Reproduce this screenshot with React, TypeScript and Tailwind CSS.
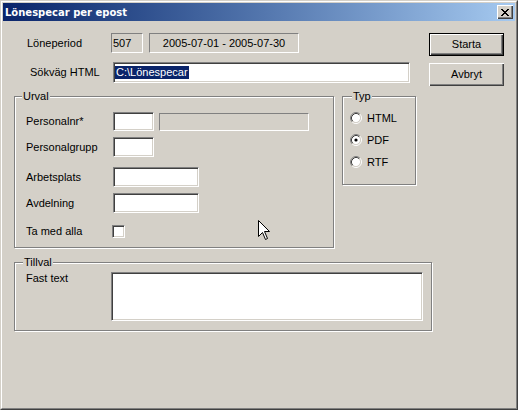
const sunken =
  "border border-t-[#808080] border-l-[#808080] border-r-white border-b-white shadow-[inset_1px_1px_0_#404040,inset_-1px_-1px_0_#d4d0c8] bg-white";
const thinSunken = "border border-t-[#808080] border-l-[#808080] border-r-white border-b-white";
const etched = "relative border border-[#808080] shadow-[inset_1px_1px_0_#fff,1px_1px_0_#fff]";

function Legend({ text, left }: { text: string; left: string }) {
  return (
    <span className={`absolute top-[-7px] ${left} bg-[#d4d0c8] px-[1px] leading-[13px]`}>{text}</span>
  );
}

function Radio({ checked, label }: { checked?: boolean; label: string }) {
  return (
    <div className="flex h-[12px] items-center gap-[5px]">
      <svg width="12" height="12" viewBox="0 0 12 12">
        <circle cx="6" cy="6" r="4.2" fill="#fff" />
        <path d="M2.11 9.89A5.5 5.5 0 0 1 9.89 2.11" fill="none" stroke="#808080" />
        <path d="M9.89 2.11A5.5 5.5 0 0 1 2.11 9.89" fill="none" stroke="#fff" />
        <path d="M2.82 9.18A4.5 4.5 0 0 1 9.18 2.82" fill="none" stroke="#404040" />
        <path d="M9.18 2.82A4.5 4.5 0 0 1 2.82 9.18" fill="none" stroke="#d4d0c8" />
        {checked && <circle cx="6" cy="6" r="1.6" fill="#000" />}
      </svg>
      <span className="leading-[13px]">{label}</span>
    </div>
  );
}

function FieldRow({ label, className, children }: { label: string; className?: string; children: React.ReactNode }) {
  return (
    <div className={`flex items-center ${className ?? ""}`}>
      <span className="w-[87px] leading-[13px]">{label}</span>
      {children}
    </div>
  );
}

export default function App() {
  return (
    <div
      className="relative h-[410px] w-[518px] border border-t-[#d4d0c8] border-l-[#d4d0c8] border-r-[#404040] border-b-[#404040] bg-[#d4d0c8] text-[11px] text-black"
      style={{ fontFamily: '"Liberation Sans", Arial, sans-serif' }}
    >
      <div className="flex h-full flex-col border border-t-white border-l-white border-r-[#808080] border-b-[#808080] p-[1px]">
        {/* title bar */}
        <div className="flex h-[18px] items-center justify-between bg-gradient-to-r from-[#0a246a] to-[#a6caf0] pl-[2px] pr-[2px]">
          <span className="font-['DejaVu_Sans',sans-serif] text-[10px] font-bold text-white">Lönespecar per epost</span>
          <button className="flex h-[14px] w-[16px] items-center justify-center bg-[#d4d0c8] shadow-[inset_1px_1px_0_#fff,inset_-1px_-1px_0_#404040,inset_-2px_-2px_0_#808080]">
            <svg width="8" height="7" viewBox="0 0 8 7" shapeRendering="crispEdges">
              <path d="M0 0h2v1H0zM6 0h2v1H6zM1 1h2v1H1zM5 1h2v1H5zM2 2h4v1H2zM3 3h2v1H3zM2 4h4v1H2zM1 5h2v1H1zM5 5h2v1H5zM0 6h2v1H0zM6 6h2v1H6z" fill="#000" />
            </svg>
          </button>
        </div>

        <div className="flex flex-1 flex-col px-[11px] pt-[12px]">
          {/* top rows + buttons */}
          <div className="flex justify-between">
            <div className="flex flex-col">
              <div className="flex h-[20px] items-center">
                <span className="w-[97px] pl-[13px]">Löneperiod</span>
                <div className={`${thinSunken} flex h-[20px] w-[32px] items-center pl-[1px]`}>507</div>
                <div className={`${thinSunken} ml-[6px] flex h-[20px] w-[150px] items-center justify-center`}>
                  2005-07-01 - 2005-07-30
                </div>
              </div>
              <div className="mt-[9px] flex h-[21px] items-center">
                <span className="w-[99px] pl-[16px]">Sökväg HTML</span>
                <div className={`${sunken} flex h-[21px] w-[297px] items-center pl-[1px]`}>
                  <span className="bg-[#0a246a] px-[1px] leading-[13px] text-white">C:\Lönespecar</span>
                </div>
              </div>
            </div>
            <div className="flex flex-col gap-[7px]">
              <button className="h-[23px] w-[75px] border border-black bg-[#d4d0c8] shadow-[inset_1px_1px_0_#fff,inset_-1px_-1px_0_#404040,inset_-2px_-2px_0_#808080]">
                Starta
              </button>
              <button className="h-[23px] w-[75px] bg-[#d4d0c8] shadow-[inset_1px_1px_0_#fff,inset_-1px_-1px_0_#404040,inset_-2px_-2px_0_#808080]">
                Avbryt
              </button>
            </div>
          </div>

          {/* Urval + Typ */}
          <div className="mt-[10px] flex items-start gap-[8px]">
            <div className={`${etched} h-[152px] w-[320px] pl-[11px] pt-[15px]`}>
              <Legend text="Urval" left="left-[7px]" />
              <FieldRow label="Personalnr*">
                <div className={`${sunken} h-[19px] w-[41px]`} />
                <div className={`${thinSunken} ml-[5px] h-[18px] w-[150px]`} />
              </FieldRow>
              <FieldRow label="Personalgrupp" className="mt-[6px]">
                <div className={`${sunken} h-[20px] w-[41px]`} />
              </FieldRow>
              <FieldRow label="Arbetsplats" className="mt-[10px]">
                <div className={`${sunken} h-[20px] w-[86px]`} />
              </FieldRow>
              <FieldRow label="Avdelning" className="mt-[6px]">
                <div className={`${sunken} h-[20px] w-[86px]`} />
              </FieldRow>
              <div className="mt-[12px] flex items-center">
                <span className="w-[86px] leading-[13px]">Ta med alla</span>
                <div className={`${sunken} h-[13px] w-[13px]`} />
              </div>
            </div>

            <div className={`${etched} flex h-[89px] w-[74px] flex-col gap-[10px] pl-[7px] pt-[15px]`}>
              <Legend text="Typ" left="left-[9px]" />
              <Radio label="HTML" />
              <Radio label="PDF" checked />
              <Radio label="RTF" />
            </div>
          </div>

          {/* Tillval */}
          <div className={`${etched} mt-[14px] flex h-[69px] w-[418px] items-start pl-[11px] pt-[9px]`}>
            <Legend text="Tillval" left="left-[8px]" />
            <span className="w-[85px] leading-[13px]">Fast text</span>
            <div className={`${sunken} h-[49px] w-[312px]`} />
          </div>
        </div>
      </div>

      {/* mouse pointer */}
      <svg className="absolute left-[257px] top-[219px]" width="13" height="21" viewBox="0 0 13 21">
        <path d="M0.5 0.5V16.5L4.5 12.5L7.5 19.5L9.5 18.5L6.5 11.5H11.5Z" fill="#fff" stroke="#000" />
      </svg>
    </div>
  );
}
